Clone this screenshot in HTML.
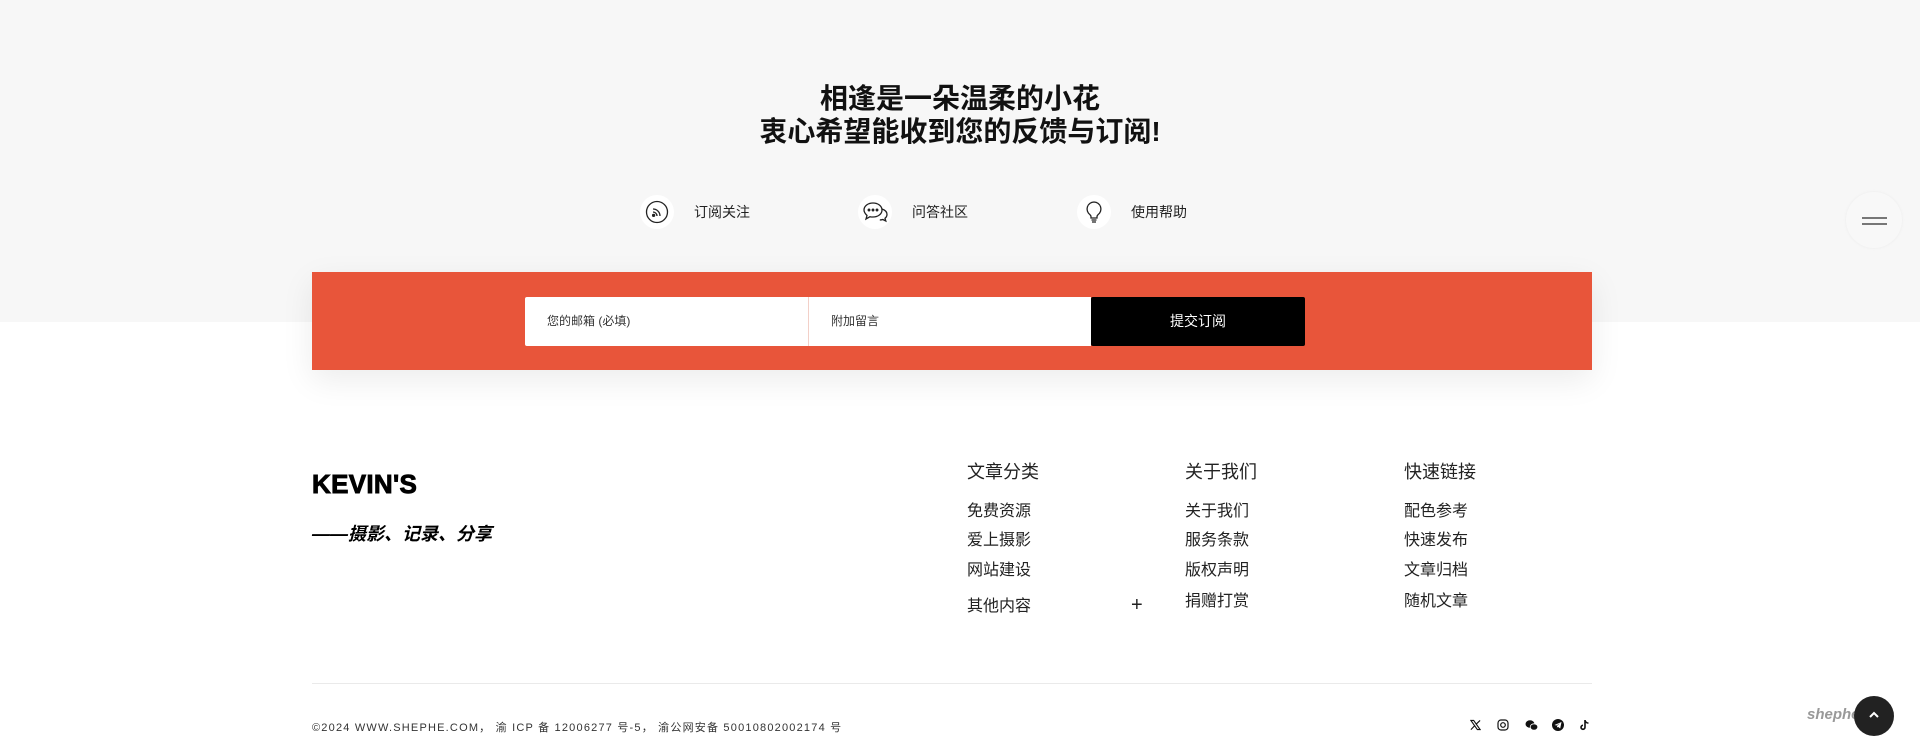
<!DOCTYPE html>
<html><head><meta charset="utf-8"><style>
*{margin:0;padding:0;box-sizing:border-box}
body{width:1920px;height:753px;overflow:hidden;background:#fff;font-family:"Liberation Sans","Noto Sans CJK SC",sans-serif;color:#222;position:relative}
.top{position:absolute;left:0;top:0;width:1920px;height:322px;background:#f7f7f7}
.abs{position:absolute}
h2{position:absolute;left:0;width:1920px;text-align:center;font-size:28px;font-weight:bold;line-height:33px;top:82px;color:#111}
.ic{position:absolute;width:34px;height:34px;border-radius:50%;background:#fff;top:195px}
.ic svg{position:absolute;left:5px;top:5px}
.lbl{position:absolute;top:202px;font-size:14px;color:#222}
.box{position:absolute;left:312px;top:272px;width:1280px;height:98px;background:#e8553a;box-shadow:0 10px 30px rgba(0,0,0,.08)}
.in{position:absolute;top:297px;height:49px;background:#fff;font-size:12px;color:#333;line-height:49px;padding-left:22px}
.btn{position:absolute;left:1091px;top:297px;width:214px;height:49px;background:#000;color:#fff;font-size:14px;line-height:49px;text-align:center;border-radius:2px}
.logo{position:absolute;left:312px;top:469px;font-size:26px;font-weight:bold;letter-spacing:.3px;color:#000;-webkit-text-stroke:.9px #000}
.tag{position:absolute;left:312px;top:520px;font-size:18px;font-weight:bold;font-style:italic;color:#000}
.col{position:absolute;top:460px}
.col .h{font-size:18px;line-height:24px;color:#222}
.col div.i{font-size:16px;line-height:22px;color:#222;position:absolute;white-space:nowrap}
.line{position:absolute;left:312px;top:683px;width:1280px;height:1px;background:#eaeaea}
.copy{position:absolute;left:312px;top:719px;font-size:11px;letter-spacing:1.2px;color:#333}
.soc{position:absolute;top:719px}
</style></head><body>
<div class="top"></div>
<h2>相逢是一朵温柔的小花<br>衷心希望能收到您的反馈与订阅!</h2>

<div class="ic" style="left:640px"><svg width="24" height="24" viewBox="0 0 24 24" fill="none" stroke="#222" stroke-width="1.3"><circle cx="12" cy="12" r="10.5"/><path d="M8 9a7 7 0 0 1 7 7M8 12a4 4 0 0 1 4 4"/><circle cx="8.6" cy="15.4" r="1" fill="#222"/></svg></div>
<div class="lbl" style="left:694px">订阅关注</div>
<div class="ic" style="left:858px"><svg width="26" height="24" viewBox="0 0 26 24" fill="none" stroke="#222" stroke-width="1.3"><path d="M10 3c5 0 9 3 9 7s-4 7-9 7c-1 0-2 0-3-.3L3 19l1-3.5C2.5 14 1 12 1 10c0-4 4-7 9-7z"/><path d="M19 9c3 1 5 3 5 5.5 0 1.5-.8 2.8-2 3.8l.8 2.7-3-1.5c-1 .3-2 .5-3 .4"/><circle cx="6" cy="10" r=".8" fill="#222"/><circle cx="10" cy="10" r=".8" fill="#222"/><circle cx="14" cy="10" r=".8" fill="#222"/></svg></div>
<div class="lbl" style="left:912px">问答社区</div>
<div class="ic" style="left:1077px"><svg width="24" height="24" viewBox="0 0 24 24" fill="none" stroke="#222" stroke-width="1.3"><path d="M12 2a7 7 0 0 0-4 12.7c.6.5 1 1.2 1 2V18h6v-1.3c0-.8.4-1.5 1-2A7 7 0 0 0 12 2z"/><path d="M9.5 20h5M10 22h4"/></svg></div>
<div class="lbl" style="left:1131px">使用帮助</div>

<div class="abs" style="left:1846px;top:192px;width:56px;height:56px;border-radius:50%;background:#f8f8f8;box-shadow:0 0 3px rgba(0,0,0,.05)"></div>
<div class="abs" style="left:1862px;top:217px;width:25px;height:2px;background:#777"></div>
<div class="abs" style="left:1862px;top:223px;width:25px;height:2px;background:#777"></div>

<div class="box"></div>
<div class="in" style="left:525px;width:283px;border-radius:2px 0 0 2px">您的邮箱 (必填)</div>
<div class="in" style="left:809px;width:282px">附加留言</div>
<div class="abs" style="left:808px;top:297px;width:1px;height:49px;background:#f3d0c8"></div>
<div class="btn">提交订阅</div>

<div class="logo">KEVIN'S</div>
<div class="tag">——摄影、记录、分享</div>

<div class="col" style="left:967px"><div class="h">文章分类</div>
<div class="i" style="top:41px">免费资源</div><div class="i" style="top:70px">爱上摄影</div><div class="i" style="top:100px">网站建设</div><div class="i" style="top:136px">其他内容</div>
<div class="i" style="top:134px;left:164px;font-size:20px">+</div></div>
<div class="col" style="left:1185px"><div class="h">关于我们</div>
<div class="i" style="top:41px">关于我们</div><div class="i" style="top:70px">服务条款</div><div class="i" style="top:100px">版权声明</div><div class="i" style="top:131px">捐赠打赏</div></div>
<div class="col" style="left:1404px"><div class="h">快速链接</div>
<div class="i" style="top:41px">配色参考</div><div class="i" style="top:70px">快速发布</div><div class="i" style="top:100px">文章归档</div><div class="i" style="top:131px">随机文章</div></div>

<div class="line"></div>
<div class="copy">©2024 WWW.SHEPHE.COM， 渝 ICP 备 12006277 号-5， 渝公网安备 50010802002174 号</div>

<svg class="soc" style="left:1470px" width="11" height="12" viewBox="0 0 12 12"><path d="M1 1h3l7 10H8z" fill="none" stroke="#111" stroke-width="1.2"/><path d="M1 11l4.3-4.5M6.8 5L11 1" stroke="#111" stroke-width="1.2"/></svg>
<svg class="soc" style="left:1497px" width="12" height="12" viewBox="0 0 12 12" fill="none" stroke="#111" stroke-width="1.2"><rect x="1" y="1" width="10" height="10" rx="3"/><circle cx="6" cy="6" r="2.3"/></svg>
<svg class="soc" style="left:1525px" width="13" height="12" viewBox="0 0 13 12"><ellipse cx="5" cy="5" rx="4.5" ry="3.8" fill="#111"/><ellipse cx="9" cy="8" rx="3.8" ry="3.2" fill="#111" stroke="#fff" stroke-width=".8"/></svg>
<svg class="soc" style="left:1552px" width="12" height="12" viewBox="0 0 12 12"><circle cx="6" cy="6" r="6" fill="#111"/><path d="M2.5 6l7-3-1.3 6.5-2.3-1.7-1 1 .2-2 3-2.6-3.7 2.3z" fill="#fff"/></svg>
<svg class="soc" style="left:1579px" width="11" height="12" viewBox="0 0 11 12"><path d="M6 1v7.3a2 2 0 1 1-2-2" fill="none" stroke="#111" stroke-width="1.6"/><path d="M6 1.5c.5 1.5 1.7 2.5 3.5 2.6" fill="none" stroke="#111" stroke-width="1.4"/></svg>

<div class="abs" style="left:1807px;top:706px;font-size:15px;font-weight:bold;font-style:italic;color:#999">shephe.com</div>
<div class="abs" style="left:1854px;top:696px;width:40px;height:40px;border-radius:50%;background:#222"></div>
<svg class="abs" style="left:1867px;top:710px" width="14" height="10" viewBox="0 0 14 10"><path d="M3 7l4-4 4 4" fill="none" stroke="#fff" stroke-width="2"/></svg>
</body></html>
